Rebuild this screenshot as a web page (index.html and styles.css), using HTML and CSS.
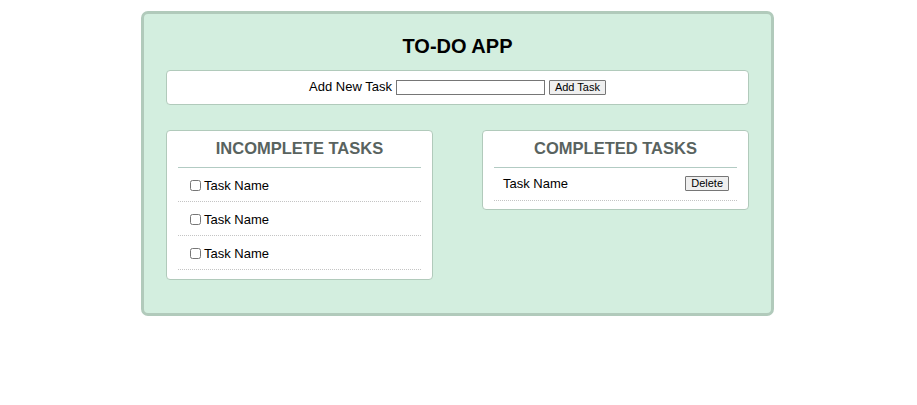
FILE: index.html
```html
<!DOCTYPE html>
<html>
<head>
<meta charset="utf-8">
<link rel="stylesheet" href="styles.css">
</head>
<body>
<div class="app">
  <h1 class="title">TO-DO APP</h1>
  <div class="add-box">
    <label class="add-label" for="new-task">Add New Task</label>
    <input class="add-input" id="new-task" type="text">
    <button class="btn">Add Task</button>
  </div>
  <div class="columns">
    <div class="panel">
      <h2 class="panel-title">INCOMPLETE TASKS</h2>
      <ul class="list">
        <li class="row"><input class="check" type="checkbox"><span>Task Name</span></li>
        <li class="row"><input class="check" type="checkbox"><span>Task Name</span></li>
        <li class="row"><input class="check" type="checkbox"><span>Task Name</span></li>
      </ul>
    </div>
    <div class="panel panel-done">
      <h2 class="panel-title">COMPLETED TASKS</h2>
      <ul class="list">
        <li class="row row-done"><span>Task Name</span><button class="btn">Delete</button></li>
      </ul>
    </div>
  </div>
</div>
</body>
</html>
```
FILE: styles.css
```css
html, body {
  margin: 0;
  padding: 0;
  background: #ffffff;
}
body {
  font-family: "Liberation Sans", Arial, sans-serif;
  font-size: 13px;
  color: #000;
}
.app {
  box-sizing: border-box;
  width: 633px;
  margin: 11px 0 0 calc(50% - 317.5px);
  padding: 20px 22px 33px;
  background: #d3eedf;
  border: 3px solid #b1cabb;
  border-radius: 7px;
}
.title {
  margin: 0 0 12px;
  font-size: 20px;
  line-height: 24px;
  font-weight: bold;
  text-align: center;
}
.add-box {
  box-sizing: border-box;
  height: 35px;
  display: flex;
  align-items: center;
  justify-content: center;
  background: #fff;
  border: 1px solid #b1cabb;
  border-radius: 4px;
  padding-bottom: 1px;
}
.add-label {
  margin-right: 4px;
  line-height: 15px;
  padding-bottom: 1px;
}
.add-input {
  box-sizing: border-box;
  width: 149px;
  height: 15px;
  margin: 0 4px 0 0;
  padding: 0 2px;
  border: 1px solid #767676;
  font-size: 11px;
}
.btn {
  box-sizing: border-box;
  height: 15px;
  padding: 0 5px;
  margin: 0;
  font-family: "Liberation Sans", Arial, sans-serif;
  font-size: 11px;
  line-height: 13px;
  background: #efefef;
  border: 1px solid #767676;
  border-radius: 1px;
  color: #000;
}
.columns {
  display: flex;
  justify-content: space-between;
  align-items: flex-start;
  margin-top: 25px;
}
.panel {
  box-sizing: border-box;
  width: 267px;
  background: #fff;
  border: 1px solid #b1cabb;
  border-radius: 4px;
  padding: 7px 11px 9px;
}
.panel-done {
  padding-bottom: 8px;
}
.panel-title {
  margin: 0;
  padding: 0 0 9px;
  font-size: 16.5px;
  line-height: 20px;
  font-weight: bold;
  text-align: center;
  color: #59635f;
  border-bottom: 1px solid #b2cbc3;
}
.list {
  list-style: none;
  margin: 0;
  padding: 0;
}
.row {
  box-sizing: border-box;
  height: 34px;
  display: flex;
  align-items: center;
  padding: 2px 8px 0;
  border-bottom: 1px dotted #c4c4c4;
}
.row-done {
  height: 33px;
  justify-content: space-between;
  padding: 0 8px 1px 9px;
}
.check {
  box-sizing: border-box;
  width: 11px;
  height: 11px;
  margin: 0 3px 0 4px;
}
```
